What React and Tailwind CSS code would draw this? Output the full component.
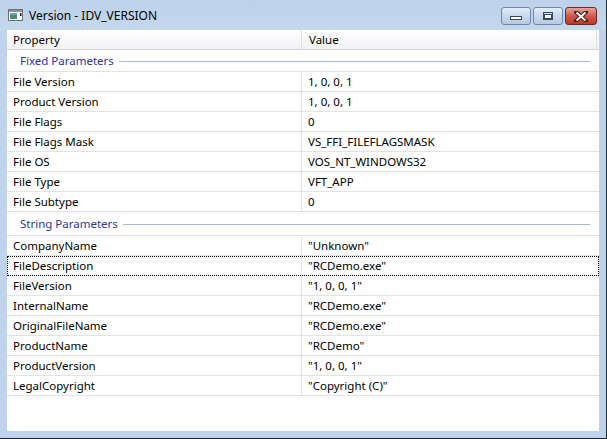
const fixed = [
  ["File Version", "1, 0, 0, 1"],
  ["Product Version", "1, 0, 0, 1"],
  ["File Flags", "0"],
  ["File Flags Mask", "VS_FFI_FILEFLAGSMASK"],
  ["File OS", "VOS_NT_WINDOWS32"],
  ["File Type", "VFT_APP"],
  ["File Subtype", "0"],
];

const strings = [
  ["CompanyName", '"Unknown"'],
  ["FileDescription", '"RCDemo.exe"', true],
  ["FileVersion", '"1, 0, 0, 1"'],
  ["InternalName", '"RCDemo.exe"'],
  ["OriginalFileName", '"RCDemo.exe"'],
  ["ProductName", '"RCDemo"'],
  ["ProductVersion", '"1, 0, 0, 1"'],
  ["LegalCopyright", '"Copyright (C)"'],
];

function Group({ label, tall }) {
  return (
    <div
      className={`flex items-center border-b border-[#e3e3e3] pl-[13px] pr-[9px] pt-px ${
        tall ? "h-[24px]" : "h-[22px]"
      }`}
    >
      <span className="text-[#2b33a8]">{label}</span>
      <div className="ml-[5px] h-px flex-1 bg-[#a9b6d6]" />
    </div>
  );
}

function Row({ name, value, focus }) {
  return (
    <div
      className={`flex h-[20px] items-center border-b border-[#e3e3e3] ${
        focus ? "outline outline-1 outline-dotted outline-black -outline-offset-1" : ""
      }`}
    >
      <div className="flex h-full w-[295px] items-center border-r border-[#e3e3e3] pl-[6px] pt-px">
        {name}
      </div>
      <div className="pl-[6px] pt-px">{value}</div>
    </div>
  );
}

function CaptionButton({ kind }) {
  if (kind === "close") {
    return (
      <div className="flex h-[18px] w-[32px] items-center justify-center rounded-[3px] border border-[#6f2a24] bg-gradient-to-b from-[#e3a49a] via-[#cf5a4c] to-[#b8392c]">
        <svg width="14" height="11" viewBox="0 0 14 11">
          <path d="M2 1 L12 10 M12 1 L2 10" stroke="#4a1a14" strokeWidth="4" strokeLinecap="square" />
          <path d="M2.5 1.5 L11.5 9.5 M11.5 1.5 L2.5 9.5" stroke="#fff" strokeWidth="2" />
        </svg>
      </div>
    );
  }
  return (
    <div className="flex h-[18px] w-[30px] items-center justify-center rounded-[3px] border border-[#6e87a8] bg-gradient-to-b from-[#e4eef9] via-[#c7d8ec] to-[#b7cbe3]">
      {kind === "min" ? (
        <svg width="14" height="10" viewBox="0 0 14 10">
          <rect x="1.5" y="5.5" width="11" height="3" fill="#fff" stroke="#3a4a5e" />
        </svg>
      ) : (
        <svg width="12" height="10" viewBox="0 0 12 10">
          <rect x="1.5" y="1.5" width="9" height="7" fill="none" stroke="#3a4a5e" />
          <rect x="2.5" y="3.5" width="7" height="4" fill="#fff" stroke="#3a4a5e" />
        </svg>
      )}
    </div>
  );
}

export default function App() {
  return (
    <div
      className="flex h-[439px] w-[607px] flex-col border-r border-b border-[#1b2a2f] bg-[#bfd4ec] text-[11.5px] text-black"
      style={{ fontFamily: '"Noto Sans", "Liberation Sans", sans-serif' }}
    >
      {/* Title bar */}
      <div className="flex h-[30px] items-center bg-gradient-to-b from-[#bcd2ea] to-[#c4d8ee] pl-[8px] pr-[9px]">
        <svg width="16" height="14" viewBox="0 0 16 14">
          <rect x="0.5" y="1.5" width="14" height="11" fill="#fff" stroke="#6b7074" />
          <rect x="1" y="2" width="13" height="2" fill="#8a9096" />
          <rect x="2" y="5" width="7" height="6" fill="#4d8a78" />
          <rect x="2" y="5" width="7" height="2" fill="#6aa0c4" />
          <rect x="12" y="5" width="1.5" height="3" fill="#222" />
        </svg>
        <span className="ml-[5px] pt-px text-[12px]">Version - IDV_VERSION</span>
        <div className="ml-auto flex items-center gap-[2px] self-start pt-[7px]">
          <CaptionButton kind="min" />
          <CaptionButton kind="max" />
          <CaptionButton kind="close" />
        </div>
      </div>

      {/* Body */}
      <div className="flex flex-1 flex-col px-[7px] pb-[7px]">
        <div className="flex-1 bg-white">
          <div className="flex h-[20px] items-center border-b border-[#d5d5d5] bg-gradient-to-b from-white to-[#f1f2f4]">
            <div className="flex h-full w-[295px] items-center border-r border-[#dcdfe3] pl-[6px] pt-px">
              Property
            </div>
            <div className="flex h-full flex-1 items-center border-r border-[#dcdfe3] pl-[7px] pt-px">
              Value
            </div>
            <div className="w-[2px]" />
          </div>
          <Group label="Fixed Parameters" />
          {fixed.map(([n, v]) => (
            <Row key={n} name={n} value={v} />
          ))}
          <Group label="String Parameters" tall />
          {strings.map(([n, v, f]) => (
            <Row key={n} name={n} value={v} focus={f} />
          ))}
        </div>
      </div>
    </div>
  );
}
